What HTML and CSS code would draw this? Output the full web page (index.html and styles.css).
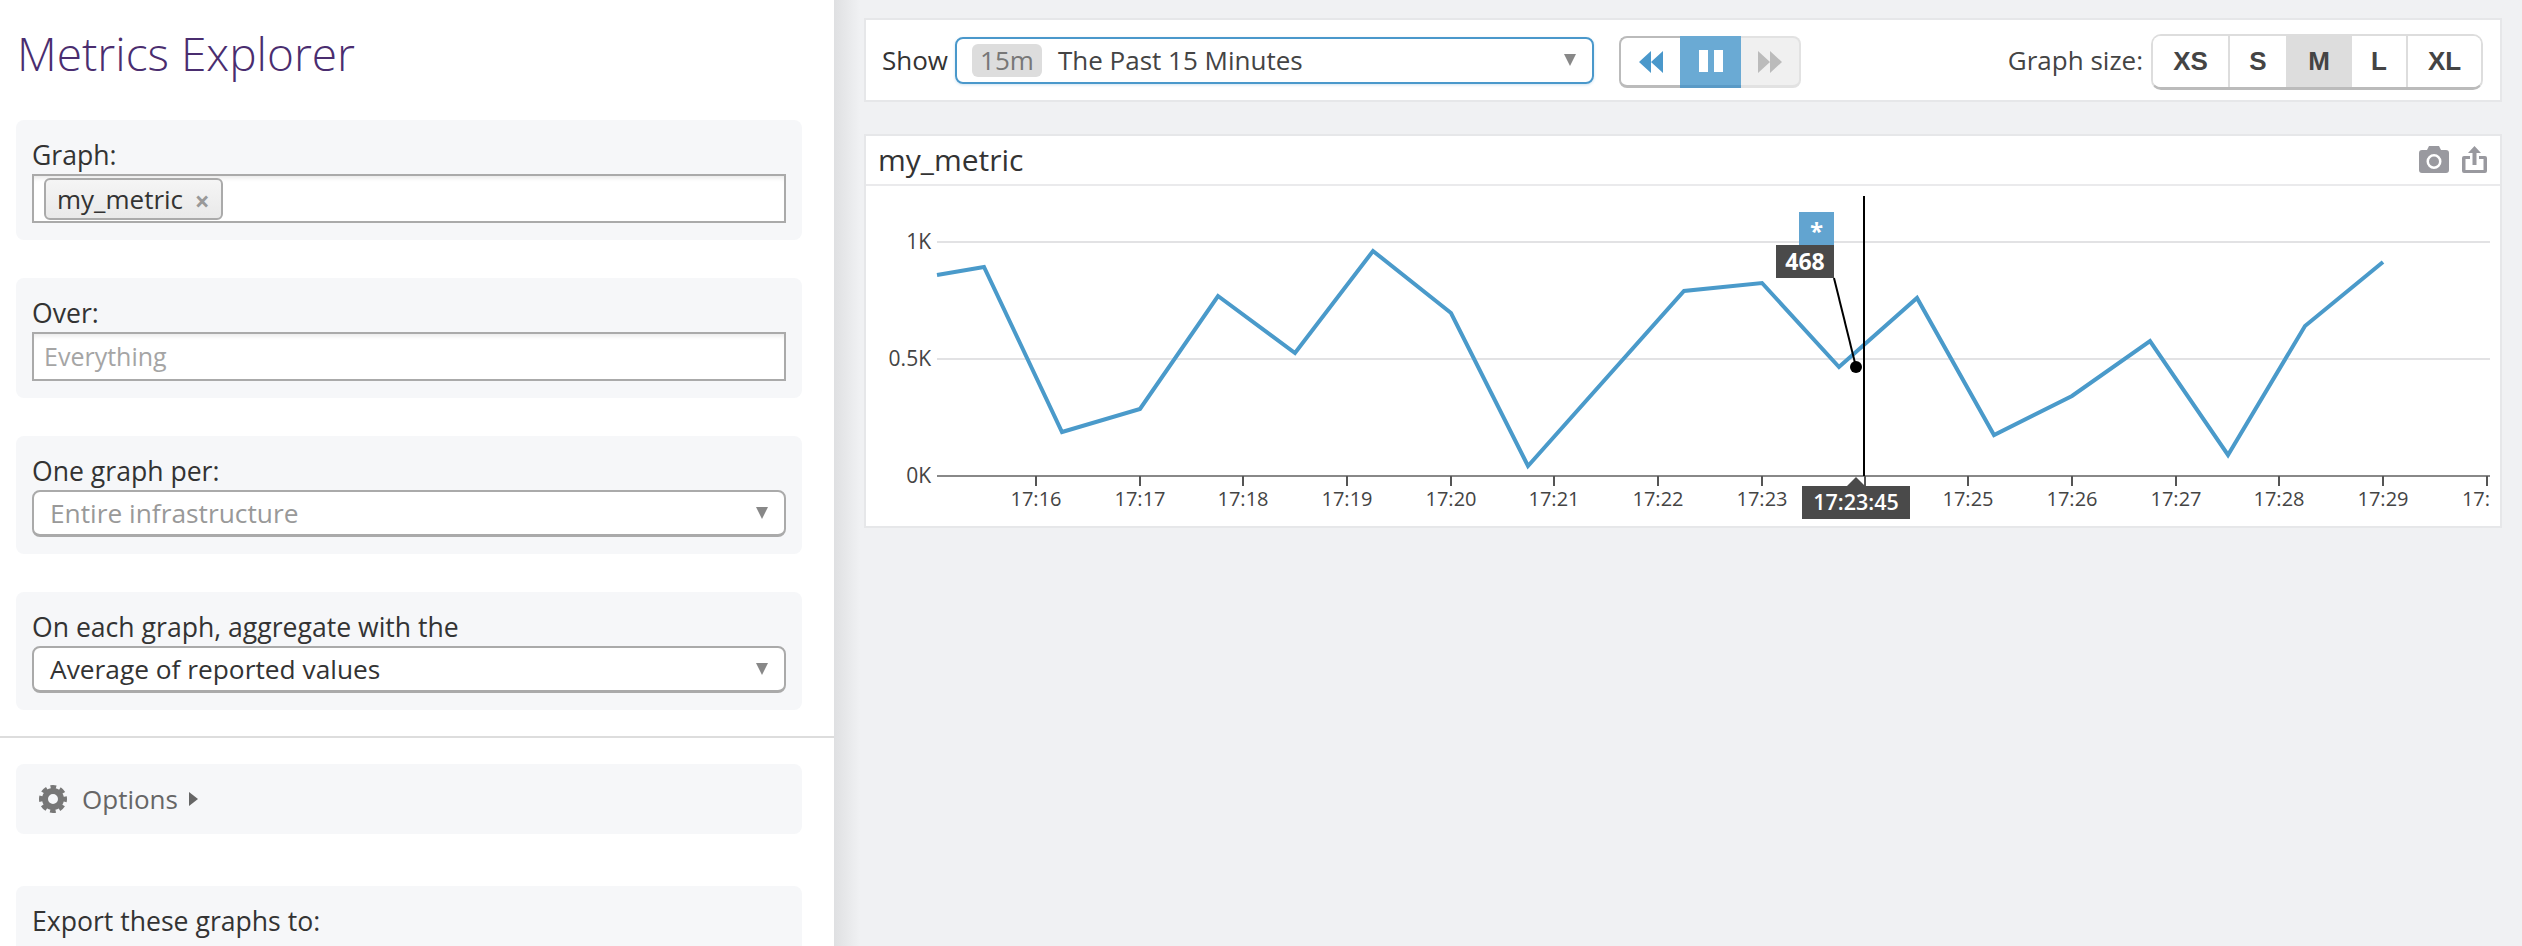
FILE: index.html
```html
<!DOCTYPE html>
<html lang="en">

<head>
  <meta charset="UTF-8">
  <title>Metrics Explorer</title>
  <link rel="stylesheet" href="styles.css">
</head>

<body>
  <aside class="sidebar">
    <h1 class="title">Metrics Explorer</h1>

    <div class="panel">
      <label class="field-label">Graph:</label>
      <div class="text-box">
        <span class="tag">my_metric <span class="tag-x">×</span></span>
      </div>
    </div>

    <div class="panel">
      <label class="field-label">Over:</label>
      <div class="text-box placeholder">Everything</div>
    </div>

    <div class="panel">
      <label class="field-label">One graph per:</label>
      <div class="select muted">Entire infrastructure<span class="arrow"></span></div>
    </div>

    <div class="panel last-field">
      <label class="field-label">On each graph, aggregate with the</label>
      <div class="select">Average of reported values<span class="arrow"></span></div>
    </div>

    <hr class="divider">

    <div class="panel options">
      <svg class="gear" width="30" height="30" viewBox="0 0 30 30">
        <circle cx="15" cy="15" r="8" fill="none" stroke="#777" stroke-width="6" />
        <circle cx="15" cy="15" r="12" fill="none" stroke="#777" stroke-width="4" stroke-dasharray="5.6 3.82" stroke-dashoffset="2.8" />
      </svg>
      <span>Options</span>
      <span class="caret"></span>
    </div>

    <div class="panel export">
      <label class="field-label">Export these graphs to:</label>
    </div>
  </aside>

  <main class="content">
    <div class="toolbar">
      <span class="show-label">Show</span>
      <div class="time-select">
        <span class="badge">15m</span>
        <span class="time-text">The Past 15 Minutes</span>
        <span class="arrow"></span>
      </div>

      <div class="player">
        <button class="player-btn" type="button">
          <svg width="24" height="22" viewBox="0 0 24 22"><path d="M12 0V22L0 11ZM24 0V22L12 11Z" fill="#4a98cb" /></svg>
        </button>
        <button class="player-btn active" type="button">
          <svg width="24" height="22" viewBox="0 0 24 22"><path d="M0 0H9V22H0ZM15 0H24V22H15Z" fill="#fff" /></svg>
        </button>
        <button class="player-btn disabled" type="button">
          <svg width="24" height="22" viewBox="0 0 24 22"><path d="M0 0V22L12 11ZM12 0V22L24 11Z" fill="#bbb" /></svg>
        </button>
      </div>

      <div class="size-wrap">
        <span class="size-label">Graph size:</span>
        <div class="size-group">
          <button class="size-btn xs" type="button">XS</button>
          <button class="size-btn s" type="button">S</button>
          <button class="size-btn m selected" type="button">M</button>
          <button class="size-btn l" type="button">L</button>
          <button class="size-btn xl" type="button">XL</button>
        </div>
      </div>
    </div>

    <section class="card">
      <div class="card-head">
        <span class="card-title">my_metric</span>
        <div class="card-icons">
          <svg width="30" height="27" viewBox="0 0 30 27">
            <path fill-rule="evenodd" fill="#99999f" d="M8 4L10 0H20L22 4H27Q30 4 30 7V24Q30 27 27 27H3Q0 27 0 24V7Q0 4 3 4ZM15 8A7.500 7.500 0 1 0 15.001 23A7.500 7.500 0 1 0 15 8ZM15 10.500A5 5 0 1 1 14.999 20.500A5 5 0 1 1 15 10.500Z" />
          </svg>
          <svg width="25" height="27" viewBox="0 0 25 27">
            <path fill="#99999f" d="M12.500 0L19 7H14.500V19H10.500V7H6ZM2 10H8V13H3.500V24H21.500V13H17V10H23Q25 10 25 12V25Q25 27 23 27H2Q0 27 0 25V12Q0 10 2 10Z" />
          </svg>
        </div>
      </div>

      <svg class="chart" width="1634" height="340" viewBox="866 186 1634 340">
        <g class="grid">
          <line x1="937" y1="242" x2="2490" y2="242" />
          <line x1="937" y1="359" x2="2490" y2="359" />
        </g>

        <g class="y-labels">
          <text x="931" y="249">1K</text>
          <text x="931" y="366">0.5K</text>
          <text x="931" y="483">0K</text>
        </g>

        <line class="axis" x1="937" y1="476" x2="2490" y2="476" />
        <path class="ticks" d="M1036 476V486M1140 476V486M1243 476V486M1347 476V486M1451 476V486M1554 476V486M1658 476V486M1762 476V486M1865 476V486M1968 476V486M2072 476V486M2176 476V486M2279 476V486M2383 476V486M2487 476V486" />

        <g class="x-labels">
          <text x="1036" y="506">17:16</text>
          <text x="1140" y="506">17:17</text>
          <text x="1243" y="506">17:18</text>
          <text x="1347" y="506">17:19</text>
          <text x="1451" y="506">17:20</text>
          <text x="1554" y="506">17:21</text>
          <text x="1658" y="506">17:22</text>
          <text x="1762" y="506">17:23</text>
          <text x="1968" y="506">17:25</text>
          <text x="2072" y="506">17:26</text>
          <text x="2176" y="506">17:27</text>
          <text x="2279" y="506">17:28</text>
          <text x="2383" y="506">17:29</text>
          <text x="2476" y="506">17:</text>
        </g>

        <polyline class="series" points="937,275 984,267 1062,432 1140,409 1218,296 1295,353 1373,251 1451,313 1528,466 1684,291 1762,283 1839,367 1917,298 1994,435 2072,396 2150,341 2228,455 2305,326 2383,262" />

        <line class="cursor" x1="1864" y1="196" x2="1864" y2="476" />
        <line class="leader" x1="1834" y1="278" x2="1856" y2="367" />
        <circle cx="1856" cy="367" r="6" fill="#000" />

        <rect x="1799" y="212" width="35" height="33" fill="#62a4d0" />
        <text class="tip-star" x="1816.500" y="240">*</text>
        <rect x="1776" y="245" width="58" height="33" fill="#4a4a4a" />
        <text class="tip-value" x="1805" y="270">468</text>

        <path d="M1847 486L1856 477L1865 486Z" fill="#4a4a4a" />
        <rect x="1802" y="486" width="108" height="33" fill="#4a4a4a" />
        <text class="tip-time" x="1856" y="510">17:23:45</text>
      </svg>
    </section>
  </main>
</body>

</html>
```

FILE: styles.css
```css
* {
  box-sizing: border-box;
}

html,
body {
  height: 946px;
  overflow: hidden;
}

body {
  display: flex;
  margin: 0;
  background-color: #f0f1f3;
  color: #333;
  font-family: "Open Sans", "Noto Sans", sans-serif;
  font-size: 26px;
}

/* left column */
.sidebar {
  width: 834px;
  flex-shrink: 0;
  padding: 0 32px 0 16px;
  background-color: #fff;
}

.title {
  height: 110px;
  margin: 0 0 10px 1px;
  color: #4a2d6f;
  font-size: 46px;
  font-weight: 300;
  line-height: 107px;
}

.panel {
  margin-bottom: 38px;
  padding: 16px 16px 17px;
  background-color: #f6f7f9;
  border-radius: 8px;
}

.panel.last-field {
  margin-bottom: 26px;
}

.field-label {
  display: block;
  height: 38px;
  font-size: 26.6px;
  line-height: 38px;
}

.text-box {
  height: 49px;
  padding: 2px 10px;
  background-color: #fff;
  border: 2px solid #aaa;
  box-shadow: inset 0 5px 5px -3px #e8e8e8;
}

.placeholder {
  color: #a5a5a5;
  font-size: 25px;
  line-height: 41px;
}

.tag {
  display: inline-flex;
  align-items: center;
  height: 42px;
  padding: 0 11px;
  background: linear-gradient(#f5f5f5, #e9e9e9);
  border: 2px solid #aaa;
  border-radius: 6px;
  color: #333;
  white-space: pre;
}

.tag-x {
  margin: 3px 0 0 5px;
  color: #999;
  font-weight: 700;
}

.select {
  position: relative;
  height: 47px;
  padding-left: 16px;
  background-color: #fff;
  border: 2px solid #aaa;
  border-bottom-width: 3px;
  border-radius: 8px;
  font-size: 26.3px;
  line-height: 42px;
}

.muted {
  color: #999;
}

.arrow {
  position: absolute;
  top: 50%;
  right: 16px;
  margin-top: -6px;
  border-top: 12px solid #888;
  border-left: 6px solid transparent;
  border-right: 6px solid transparent;
}

.divider {
  height: 2px;
  margin: 0 -32px 26px -16px;
  background-color: #ddd;
  border: none;
}

.options {
  display: flex;
  align-items: center;
  height: 70px;
  margin-bottom: 52px;
  padding: 0 0 0 22px;
  color: #666;
}

.gear {
  margin-right: 14px;
}

.caret {
  margin-left: 11px;
  border-left: 9px solid #666;
  border-top: 7.500px solid transparent;
  border-bottom: 7.500px solid transparent;
}

.export {
  height: 60px;
  margin-bottom: 0;
  border-radius: 8px 8px 0 0;
}

/* right column */
.content {
  flex: 1;
  padding: 18px 20px 0 30px;
  background: linear-gradient(to right, #dfe0e2, #f0f1f3 26px);
}

.toolbar {
  display: flex;
  align-items: center;
  height: 84px;
  padding: 0 17px 0 16px;
  background-color: #fff;
  border: 2px solid #e6e7e9;
}

.show-label {
  width: 73px;
}

.time-select {
  position: relative;
  display: flex;
  align-items: center;
  width: 639px;
  height: 47px;
  padding-left: 15px;
  border: 2px solid #4a98cb;
  border-radius: 8px;
  box-shadow: 0 1px 3px #cfe3f1;
  color: #444;
}

.badge {
  width: 70px;
  height: 33px;
  background-color: #ddd;
  border-radius: 6px;
  color: #777;
  line-height: 33px;
  text-align: center;
}

.time-text {
  margin-left: 16px;
}

.player {
  display: flex;
  height: 52px;
  margin: 4px 0 0 25px;
}

.player-btn {
  display: flex;
  align-items: center;
  justify-content: center;
  width: 61px;
  padding: 0;
  background-color: #fff;
  border: 2px solid #bbb;
  border-bottom-width: 3px;
  border-right: none;
  border-radius: 8px 0 0 8px;
}

.player-btn.active {
  background-color: #6aaad4;
  border: none;
  border-bottom: 3px solid #5a9ac6;
  border-radius: 0;
}

.player-btn.disabled {
  width: 60px;
  background-color: #f0f0f0;
  border: 2px solid #e2e2e2;
  border-bottom-width: 3px;
  border-left: none;
  border-radius: 0 8px 8px 0;
}

.size-wrap {
  display: flex;
  align-items: center;
  margin-left: auto;
}

.size-label {
  margin-right: 8px;
  color: #444;
}

.size-group {
  display: flex;
  height: 56px;
  margin-top: 4px;
  border: 2px solid #ddd;
  border-bottom: 3px solid #bbb;
  border-radius: 10px;
  overflow: hidden;
}

.size-btn {
  padding: 0;
  background-color: #fff;
  border: none;
  border-right: 2px solid #ddd;
  color: #444;
  font-family: "Liberation Sans", Arial, sans-serif;
  font-size: 26px;
  font-weight: 700;
}

.size-btn.xs {
  width: 77px;
}

.size-btn.s {
  width: 58px;
}

.size-btn.m {
  width: 64px;
}

.size-btn.l {
  width: 56px;
}

.size-btn.xl {
  width: 73px;
  border-right: none;
}

.size-btn.selected {
  background-color: #ddd;
}

.card {
  margin-top: 32px;
  height: 394px;
  background-color: #fff;
  border: 2px solid #e6e7e9;
}

.card-head {
  display: flex;
  align-items: center;
  justify-content: space-between;
  height: 50px;
  padding: 0 13px 2px 12px;
  border-bottom: 2px solid #eaeaec;
}

.card-title {
  color: #333;
  font-size: 30px;
}

.card-icons {
  display: flex;
  gap: 13px;
}

.chart {
  display: block;
}

.grid line {
  stroke: #e2e2e4;
  stroke-width: 2;
}

.y-labels text {
  fill: #444;
  font-size: 21px;
  text-anchor: end;
}

.axis {
  stroke: #888;
  stroke-width: 2;
}

.ticks {
  fill: none;
  stroke: #555;
  stroke-width: 2;
}

.x-labels text {
  fill: #444;
  font-size: 20px;
  text-anchor: middle;
}

.series {
  fill: none;
  stroke: #4a9aca;
  stroke-width: 4;
}

.cursor {
  stroke: #000;
  stroke-width: 2;
}

.leader {
  stroke: #000;
  stroke-width: 2;
}

.tip-star,
.tip-value,
.tip-time {
  fill: #fff;
  text-anchor: middle;
}

.tip-star {
  font-size: 24px;
  font-weight: 700;
}

.tip-value {
  font-size: 23px;
  font-weight: 700;
}

.tip-time {
  font-size: 21.500px;
  font-weight: 600;
}
```
